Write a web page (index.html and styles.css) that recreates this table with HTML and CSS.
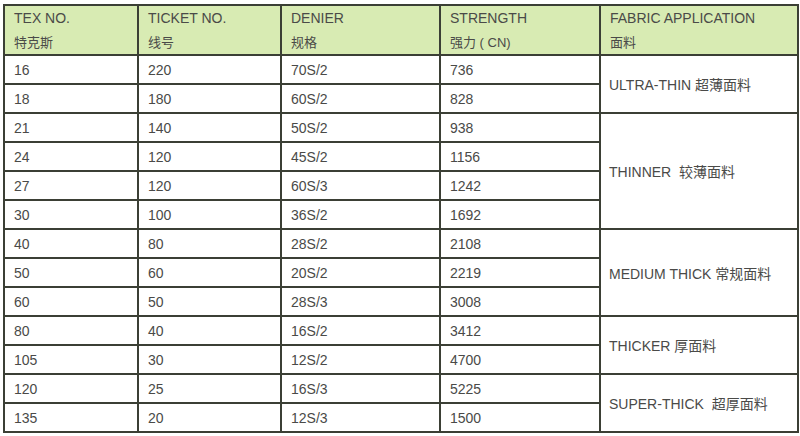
FILE: index.html
```html
<!DOCTYPE html>
<html lang="zh">
<head>
<meta charset="utf-8">
<title>Thread specification table</title>
<link rel="stylesheet" href="styles.css">
</head>
<body>
<table class="spec">
  <colgroup>
    <col class="c1"><col class="c2"><col class="c3"><col class="c4"><col class="c5">
  </colgroup>
  <thead>
    <tr>
      <th><span class="en">TEX NO.</span><span class="zh">特克斯</span></th>
      <th><span class="en">TICKET NO.</span><span class="zh">线号</span></th>
      <th><span class="en">DENIER</span><span class="zh">规格</span></th>
      <th><span class="en">STRENGTH</span><span class="zh">强力 ( CN)</span></th>
      <th><span class="en">FABRIC APPLICATION</span><span class="zh">面料</span></th>
    </tr>
  </thead>
  <tbody>
    <tr><td>16</td><td>220</td><td>70S/2</td><td>736</td><td class="app" rowspan="2">ULTRA-THIN 超薄面料</td></tr>
    <tr><td>18</td><td>180</td><td>60S/2</td><td>828</td></tr>
    <tr><td>21</td><td>140</td><td>50S/2</td><td>938</td><td class="app" rowspan="4">THINNER&nbsp; 较薄面料</td></tr>
    <tr><td>24</td><td>120</td><td>45S/2</td><td>1156</td></tr>
    <tr><td>27</td><td>120</td><td>60S/3</td><td>1242</td></tr>
    <tr><td>30</td><td>100</td><td>36S/2</td><td>1692</td></tr>
    <tr><td>40</td><td>80</td><td>28S/2</td><td>2108</td><td class="app" rowspan="3">MEDIUM THICK 常规面料</td></tr>
    <tr><td>50</td><td>60</td><td>20S/2</td><td>2219</td></tr>
    <tr><td>60</td><td>50</td><td>28S/3</td><td>3008</td></tr>
    <tr><td>80</td><td>40</td><td>16S/2</td><td>3412</td><td class="app" rowspan="2">THICKER 厚面料</td></tr>
    <tr><td>105</td><td>30</td><td>12S/2</td><td>4700</td></tr>
    <tr><td>120</td><td>25</td><td>16S/3</td><td>5225</td><td class="app" rowspan="2">SUPER-THICK&nbsp; 超厚面料</td></tr>
    <tr><td>135</td><td>20</td><td>12S/3</td><td>1500</td></tr>
  </tbody>
</table>
</body>
</html>
```

FILE: styles.css
```css
html, body {
  margin: 0;
  padding: 0;
  background: #ffffff;
}

body {
  padding: 4px 0 0 3px;
  font-family: "Liberation Sans", Arial, "Noto Sans CJK SC", sans-serif;
  color: #4a4a48;
}

.spec {
  border-collapse: collapse;
  table-layout: fixed;
  width: 794px;
}

.c1 { width: 134px; }
.c2 { width: 143px; }
.c3 { width: 159px; }
.c4 { width: 160px; }
.c5 { width: 198px; }

.spec th,
.spec td {
  border: 2px solid #3b3f35;
  padding: 0 0 0 9px;
  text-align: left;
  vertical-align: middle;
  font-weight: normal;
}

.spec th {
  background: #d8ebb3;
  height: 48px;
  vertical-align: top;
}

.en {
  display: block;
  padding-top: 1px;
  font-size: 14px;
  line-height: 22px;
}

.zh {
  display: block;
  margin-top: 3px;
  font-size: 13px;
  line-height: 22px;
  font-family: "Liberation Sans", "Noto Sans CJK SC", sans-serif;
}

.spec td {
  height: 27px;
  font-size: 14px;
  font-family: "Liberation Sans", "Noto Sans CJK SC", sans-serif;
}

.spec td.app {
  padding-left: 8px;
}
```
